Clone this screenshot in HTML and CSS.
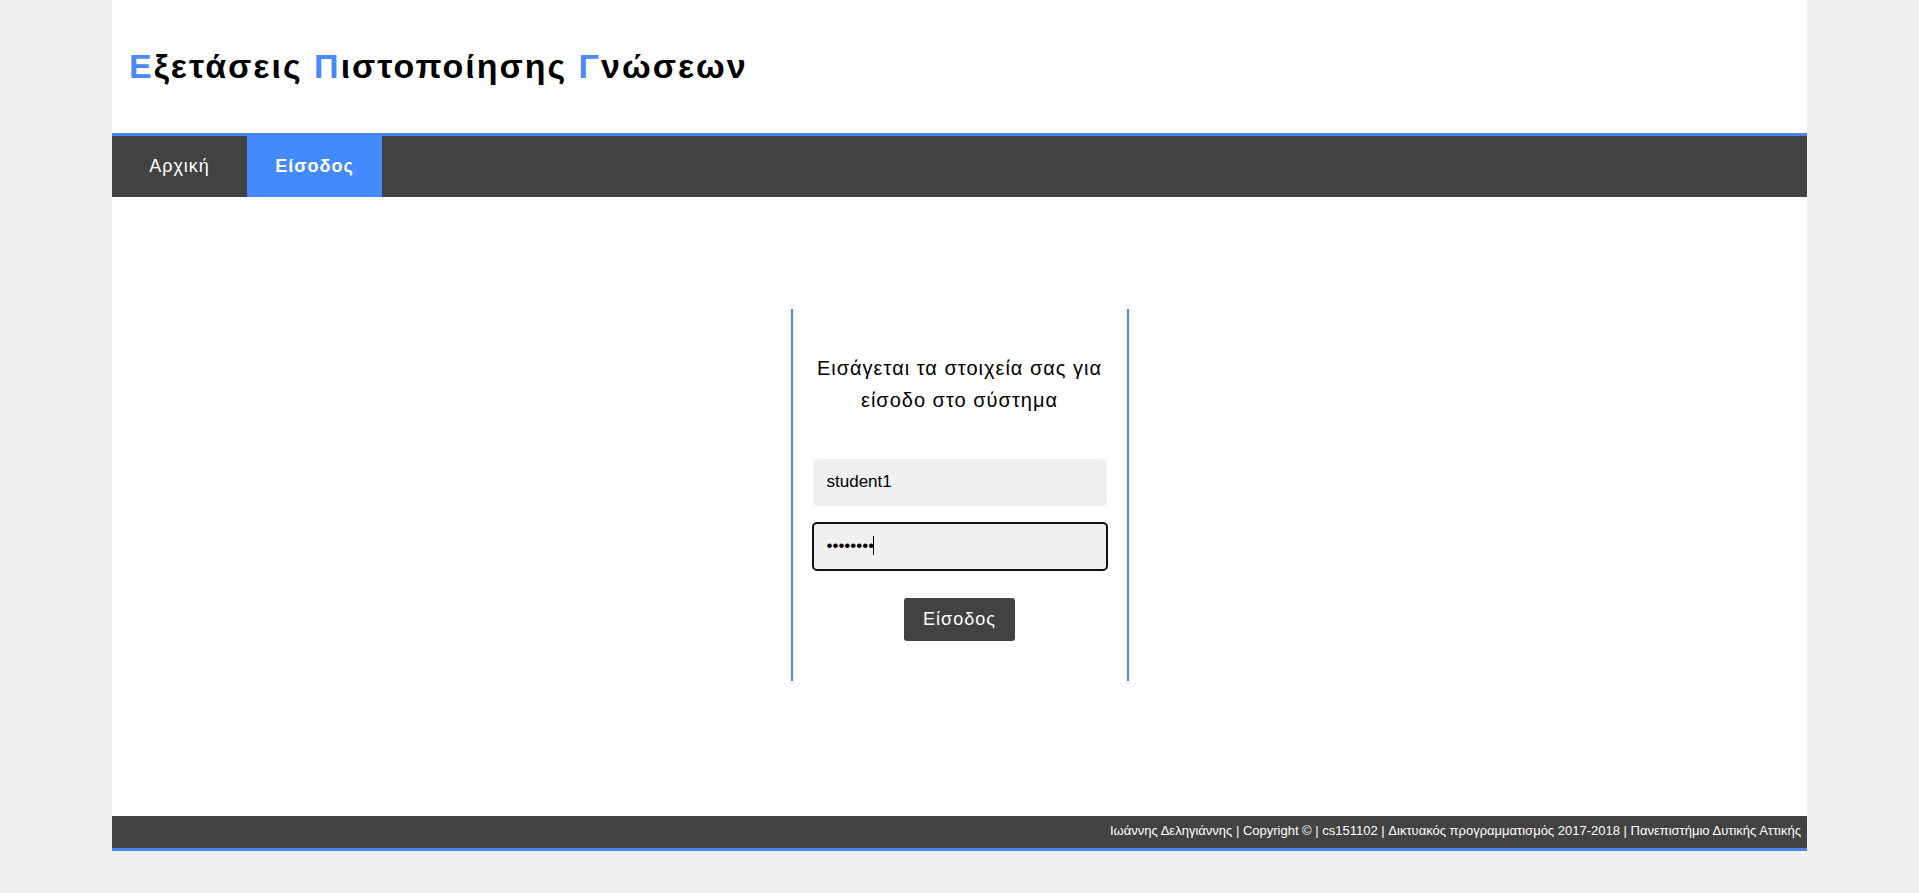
FILE: index.html
```html
<!DOCTYPE html>
<html lang="el">
<head>
<meta charset="utf-8">
<title>Εξετάσεις Πιστοποίησης Γνώσεων</title>
<link rel="stylesheet" href="styles.css">
</head>
<body>
<div class="page">
  <header class="header">
    <h1 class="title"><span class="initial">Ε</span>ξετάσεις <span class="initial">Π</span>ιστοποίησης <span class="initial">Γ</span>νώσεων</h1>
  </header>
  <nav class="nav">
    <a class="nav-link" href="#home">Αρχική</a>
    <a class="nav-link nav-link-active" href="#login" aria-current="page">Είσοδος</a>
  </nav>
  <main class="main">
    <form class="login">
      <p class="prompt">Εισάγεται τα στοιχεία σας για είσοδο στο σύστημα</p>
      <div class="field-row">
        <input class="field" type="text" name="username" aria-label="Όνομα χρήστη" value="student1">
      </div>
      <div class="field-row">
        <input class="field" type="password" name="password" aria-label="Κωδικός" value="student1" autofocus>
        <span class="caret" aria-hidden="true"></span>
      </div>
      <button class="submit" type="submit">Είσοδος</button>
    </form>
  </main>
  <footer class="footer">Ιωάννης Δεληγιάννης | Copyright © | cs151102 | Δικτυακός προγραμματισμός 2017-2018 | Πανεπιστήμιο Δυτικής Αττικής</footer>
</div>
</body>
</html>
```
FILE: styles.css
```css
* {
  box-sizing: border-box;
}

body {
  margin: 0;
  background: #f0f0f0;
  color: #000;
  font-family: "Liberation Sans", Arial, sans-serif;
}

.page {
  margin: 0 112px;
  background: #fff;
}

.header {
  padding: 44px 17px 45px;
  border-bottom: 3px solid #4a86e8;
}

.title {
  margin: 0;
  font-size: 34px;
  line-height: 44px;
  letter-spacing: 2px;
}

.initial {
  color: #4a8af8;
}

.nav {
  display: flex;
  background: #424242;
}

.nav-link {
  width: 135px;
  padding: 20px 0;
  color: #fff;
  font-size: 18px;
  line-height: 21px;
  letter-spacing: 1px;
  text-align: center;
  text-decoration: none;
}

.nav-link-active {
  background: #448aff;
  font-weight: bold;
}

.main {
  padding: 112px 16px 135px;
}

.login {
  display: flex;
  flex-direction: column;
  align-items: center;
  max-width: 338px;
  margin: 0 auto;
  padding: 43px 20px 40px;
  border: solid #4a86e8;
  border-width: 0 2px;
}

.prompt {
  margin: 0 0 43px;
  font-size: 20px;
  line-height: 32px;
  letter-spacing: 1px;
  text-align: center;
}

.field-row {
  position: relative;
  width: 100%;
  margin-bottom: 17px;
}

.field {
  display: block;
  width: 100%;
  height: 47px;
  padding: 0 14px 2px;
  border: 0;
  border-radius: 4px;
  background: #f0f0f0;
  color: #000;
  caret-color: transparent;
  font: 17px "Liberation Sans", Arial, sans-serif;
}

.field:focus {
  outline: 2px solid #101010;
  outline-offset: -1px;
}

.caret {
  display: none;
  position: absolute;
  top: 13px;
  left: 60px;
  width: 1px;
  height: 19px;
  background: #000;
}

.field:focus + .caret {
  display: block;
}

.submit {
  margin: 11px 0 0;
  padding: 11px 19px;
  border: 0;
  border-radius: 3px;
  background: #424242;
  color: #fff;
  font: 18px/21px "Liberation Sans", Arial, sans-serif;
  letter-spacing: 1px;
}

.footer {
  padding: 6px 6px 8px;
  border-bottom: 3px solid #4a86e8;
  background: #424242;
  color: #fff;
  font-size: 13px;
  line-height: 18px;
  text-align: right;
}
```
